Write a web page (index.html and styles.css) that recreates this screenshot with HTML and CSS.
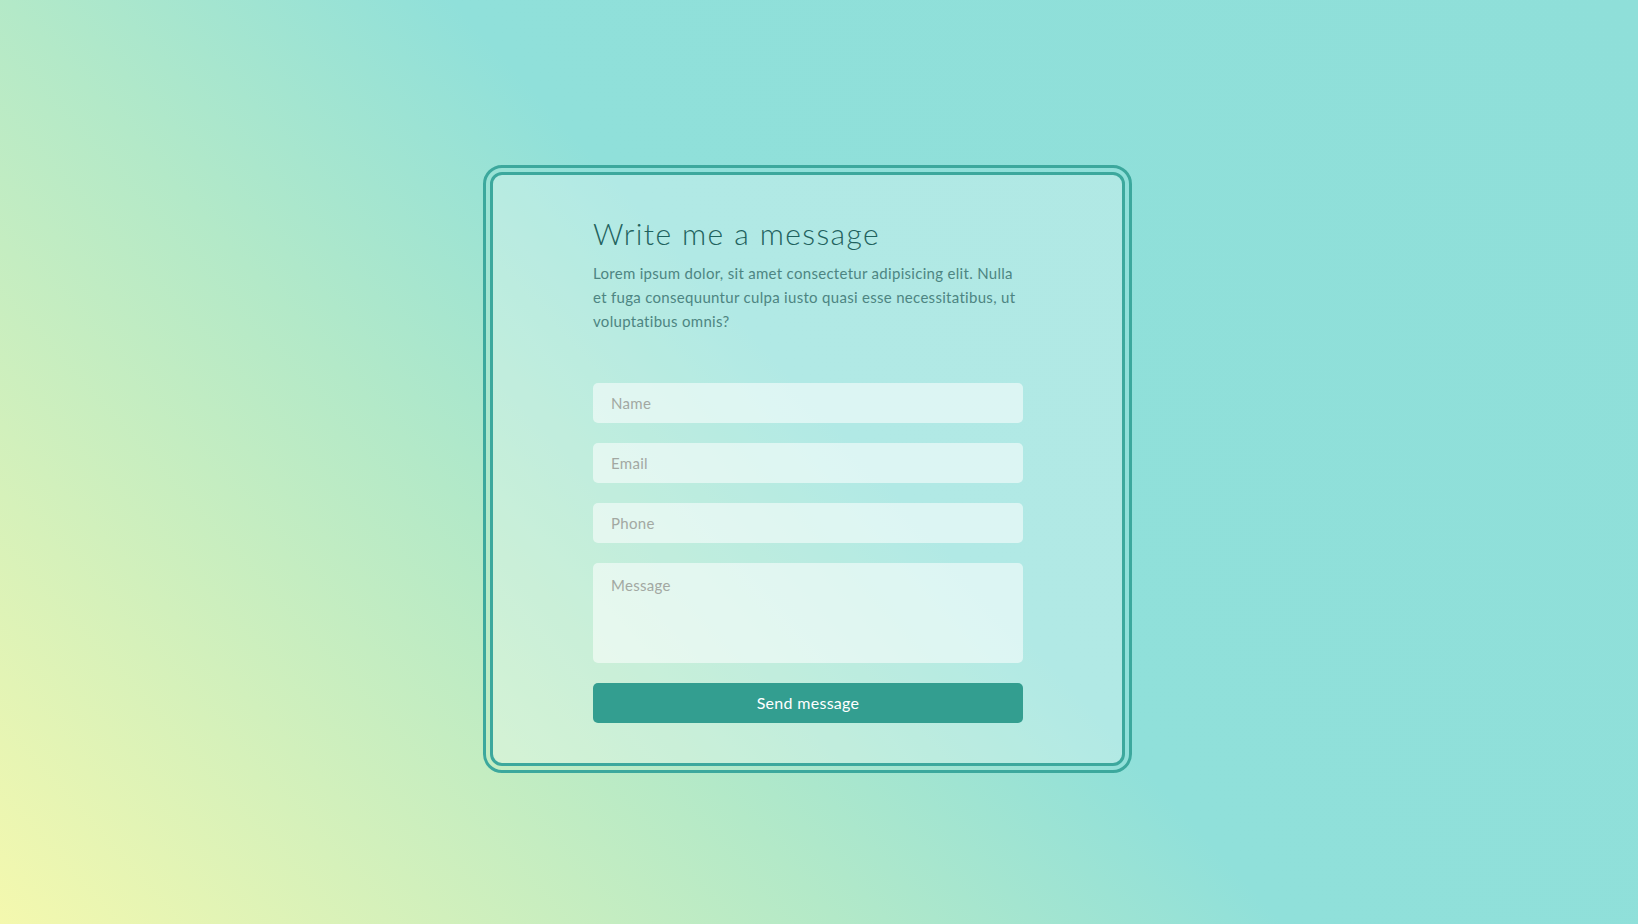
FILE: index.html
```html
<!DOCTYPE html>
<html lang="en">
<head>
<meta charset="utf-8">
<title>Write me a message</title>
<link rel="stylesheet" href="styles.css">
</head>
<body>
  <main class="stage">
    <section class="card">
      <h1 class="card-title">Write me a message</h1>
      <p class="card-text">Lorem ipsum dolor, sit amet consectetur adipisicing elit. Nulla et fuga consequuntur culpa iusto quasi esse necessitatibus, ut voluptatibus omnis?</p>
      <form class="form">
        <input class="field" type="text" placeholder="Name">
        <input class="field" type="email" placeholder="Email">
        <input class="field" type="tel" placeholder="Phone">
        <textarea class="field field-area" placeholder="Message"></textarea>
        <button class="send" type="button">Send message</button>
      </form>
    </section>
  </main>
</body>
</html>
```

FILE: styles.css
```css
* { box-sizing: border-box; }

html, body {
  margin: 0;
  height: 100%;
}

body {
  font-family: Lato, "Noto Sans", sans-serif;
  background: linear-gradient(48deg, #f4f8ae 0%, #b3e9c8 34%, #90e0da 52%, #8fdfd9 100%);
}

.stage {
  height: 924px;
  display: flex;
  justify-content: center;
  align-items: center;
  padding: 14px 23px 0 0;
}

.card {
  width: 635px;
  height: 594px;
  border: 3px solid #3ca89d;
  border-radius: 12px;
  outline: 3px solid #3ca89d;
  outline-offset: 4px;
  background: rgba(255, 255, 255, 0.3);
  padding: 40px 99px 0 100px;
}

.card-title {
  margin: 0;
  font-size: 30px;
  line-height: 36px;
  font-weight: 300;
  letter-spacing: 1.4px;
  color: #1f625e;
}

.card-text {
  margin: 10px 0 0;
  font-size: 15px;
  line-height: 24px;
  letter-spacing: 0.3px;
  color: #4d8582;
}

.form {
  margin-top: 50px;
  display: flex;
  flex-direction: column;
  gap: 20px;
}

.field {
  display: block;
  width: 100%;
  height: 40px;
  border: none;
  border-radius: 5px;
  background: rgba(255, 255, 255, 0.55);
  padding: 0 18px;
  font-family: inherit;
  font-size: 15px;
  letter-spacing: 0.3px;
  color: #3b6f6c;
  outline: none;
}

.field::placeholder {
  color: #a2a8a2;
}

.field-area {
  height: 100px;
  padding-top: 12px;
  line-height: 20px;
  resize: none;
}

.send {
  height: 40px;
  padding: 0 0 2px;
  border: none;
  border-radius: 5px;
  background: #339e90;
  color: #ffffff;
  font-family: inherit;
  font-size: 16px;
  letter-spacing: 0.3px;
  cursor: pointer;
}
```
